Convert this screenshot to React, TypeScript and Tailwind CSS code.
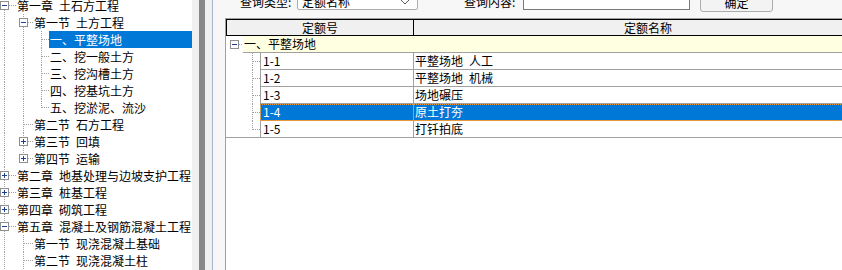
import React from 'react';

type TreeRow = {
  a: string;
  b: string;
  lvl: number;
  box?: '+' | '-';
  anc: number[];
  self: 'both' | 'top' | 'bottom';
  sel?: boolean;
};

const LX = [4, 23, 41];
const BOXX = [0, 19];
const TL = [16, 33, 49];

const rows: TreeRow[] = [
  { a: '第一章', b: '土石方工程', lvl: 0, box: '-', anc: [], self: 'bottom' },
  { a: '第一节', b: '土方工程', lvl: 1, box: '-', anc: [4], self: 'both' },
  { a: '一、平整场地', b: '', lvl: 2, anc: [4, 23], self: 'both', sel: true },
  { a: '二、挖一般土方', b: '', lvl: 2, anc: [4, 23], self: 'both' },
  { a: '三、挖沟槽土方', b: '', lvl: 2, anc: [4, 23], self: 'both' },
  { a: '四、挖基坑土方', b: '', lvl: 2, anc: [4, 23], self: 'both' },
  { a: '五、挖淤泥、流沙', b: '', lvl: 2, anc: [4, 23], self: 'top' },
  { a: '第二节', b: '石方工程', lvl: 1, anc: [4], self: 'both' },
  { a: '第三节', b: '回填', lvl: 1, box: '+', anc: [4], self: 'both' },
  { a: '第四节', b: '运输', lvl: 1, box: '+', anc: [4], self: 'top' },
  { a: '第二章', b: '地基处理与边坡支护工程', lvl: 0, box: '+', anc: [], self: 'both' },
  { a: '第三章', b: '桩基工程', lvl: 0, box: '+', anc: [], self: 'both' },
  { a: '第四章', b: '砌筑工程', lvl: 0, box: '+', anc: [], self: 'both' },
  { a: '第五章', b: '混凝土及钢筋混凝土工程', lvl: 0, box: '-', anc: [], self: 'both' },
  { a: '第一节', b: '现浇混凝土基础', lvl: 1, anc: [4], self: 'both' },
  { a: '第二节', b: '现浇混凝土柱', lvl: 1, anc: [4], self: 'both' },
];

const DOT = '#a0a0a0';

function VLine({ x, y1, y2 }: { x: number; y1: number; y2: number }) {
  return (
    <line
      x1={x + 0.5}
      x2={x + 0.5}
      y1={y1}
      y2={y2}
      stroke={DOT}
      strokeDasharray="1 1"
      shapeRendering="crispEdges"
    />
  );
}

function HLine({ x1, x2, y }: { x1: number; x2: number; y: number }) {
  return (
    <line
      x1={x1}
      x2={x2}
      y1={y + 0.5}
      y2={y + 0.5}
      stroke={DOT}
      strokeDasharray="1 1"
      shapeRendering="crispEdges"
    />
  );
}

function Box({ x, y, kind }: { x: number; y: number; kind: '+' | '-' }) {
  return (
    <g shapeRendering="crispEdges">
      <rect x={x + 0.5} y={y + 0.5} width={8} height={8} fill="#fff" stroke="#8f8f8f" />
      <line x1={x + 2} x2={x + 7} y1={y + 4.5} y2={y + 4.5} stroke="#1c3e95" />
      {kind === '+' && <line x1={x + 4.5} x2={x + 4.5} y1={y + 2} y2={y + 7} stroke="#1c3e95" />}
    </g>
  );
}

function Gutter({ r }: { r: TreeRow }) {
  const w = TL[r.lvl];
  const x = LX[r.lvl];
  const hasBox = !!r.box;
  return (
    <svg width={w} height={17} className="block shrink-0">
      {r.anc.map((ax) => (
        <VLine key={ax} x={ax} y1={0} y2={17} />
      ))}
      {(r.self === 'both' || r.self === 'top') && <VLine x={x} y1={0} y2={hasBox ? 4 : 9} />}
      {(r.self === 'both' || r.self === 'bottom') && <VLine x={x} y1={hasBox ? 13 : 8} y2={17} />}
      <HLine x1={hasBox ? BOXX[r.lvl] + 9 : x + 1} x2={w} y={8} />
      {r.box && <Box x={BOXX[r.lvl]} y={4} kind={r.box} />}
    </svg>
  );
}

const data = [
  { no: '1-1', name: ['平整场地', '人工'] },
  { no: '1-2', name: ['平整场地', '机械'] },
  { no: '1-3', name: ['场地碾压'] },
  { no: '1-4', name: ['原土打夯'], sel: true },
  { no: '1-5', name: ['打钎拍底'] },
];

function Sp() {
  return <span className="inline-block w-[6px]" />;
}

export default function App() {
  return (
    <div className="flex h-[270px] w-[842px] overflow-hidden bg-white font-['Noto_Sans_CJK_SC','Noto_Sans',sans-serif] text-[12px] leading-[17px] text-black">
      {/* Tree panel */}
      <div className="w-[192px] shrink-0 overflow-hidden bg-white">
        <div className="-mt-[3px]">
          {rows.map((r, i) => (
            <div key={i} className="flex h-[17px] whitespace-nowrap">
              <Gutter r={r} />
              <div className={r.sel ? 'flex-1 bg-[#0078d7] pl-px text-white' : 'pl-px'}>
                {r.a}
                {r.b && (
                  <>
                    <Sp />
                    {r.b}
                  </>
                )}
              </div>
            </div>
          ))}
        </div>
      </div>

      {/* Splitter */}
      <div className="w-[7px] shrink-0 bg-[#f0f0f0]" />
      <div className="w-[6px] shrink-0 bg-[#888888]" />
      <div className="w-[7px] shrink-0 bg-[#f0f0f0]" />
      <div className="w-px shrink-0 bg-[#a9b5c9]" />

      {/* Right panel */}
      <div className="flex min-w-0 flex-1 flex-col bg-[#f7f7f7]">
        {/* Query bar (scrolled, partially visible) */}
        <div className="h-[18px] shrink-0 overflow-hidden">
          <div className="-mt-[10px] flex h-[28px] items-start whitespace-nowrap">
            <div className="ml-[27px] mt-[2px] w-[57px] leading-[20px]">查询类型:</div>
            <div className="flex h-[20px] w-[121px] shrink-0 items-start justify-between rounded-[2px] border border-[#acacac] bg-white pl-[4px] pr-[6px]">
              <span className="mt-px leading-[20px]">定额名称</span>
              <svg width="12" height="7" className="mt-[7px] block">
                <polyline points="0.5,0.5 6,6 11.5,0.5" fill="none" stroke="#5a5a5a" strokeWidth="1" />
              </svg>
            </div>
            <div className="ml-[46px] mt-[2px] w-[59px] leading-[20px]">查询内容:</div>
            <div className="h-[20px] w-[167px] shrink-0 border border-[#7a7a7a] bg-white" />
            <div className="ml-[10px] flex h-[22px] w-[73px] shrink-0 items-start justify-center rounded-[3px] border border-[#adadad] bg-[#f3f3f3]">
              <span className="mt-[2px] leading-[20px]">确定</span>
            </div>
          </div>
        </div>

        {/* Grid */}
        <div className="ml-[12px] flex w-[658px] flex-1 flex-col border-l border-t border-[#a0a0a0] bg-white">
          {/* Header */}
          <div className="flex h-[17px] shrink-0 border border-black bg-[#f0f0f0] leading-[15px]">
            <div className="w-[187px] shrink-0 border-r border-black text-center">定额号</div>
            <div className="flex-1 text-center">定额名称</div>
          </div>

          {/* Group row */}
          <div className="flex h-[17px] shrink-0">
            <svg width={17} height={17} className="block shrink-0">
              <Box x={4} y={4} kind="-" />
              <HLine x1={13} x2={17} y={8} />
            </svg>
            <div className="flex-1 border-b border-[#a0a0a0] bg-[#ffffe1] pl-px leading-[16px]">一、平整场地</div>
          </div>

          {/* Data rows */}
          {data.map((d, i) => {
            const last = i === data.length - 1;
            return (
              <div
                key={d.no}
                className={`flex h-[17px] shrink-0 whitespace-nowrap ${last ? 'border-b border-[#a0a0a0]' : ''}`}
              >
                <svg width={34} height={last ? 16 : 17} className="block shrink-0">
                  <VLine x={26} y1={0} y2={last ? 9 : 17} />
                  <HLine x1={27} x2={34} y={8} />
                </svg>
                <div
                  className={`flex flex-1 ${last ? '' : 'border-b border-[#a0a0a0]'} ${
                    d.sel
                      ? 'bg-[#0078d7] text-white outline-1 -outline-offset-1 outline-dotted outline-[#e89a3c]'
                      : ''
                  }`}
                >
                  <div className="w-[153px] shrink-0 border-l border-[#a0a0a0] pl-[2px] leading-[16px]">{d.no}</div>
                  <div className="flex-1 border-l border-[#a0a0a0] pl-px leading-[16px]">
                    {d.name[0]}
                    {d.name[1] && (
                      <>
                        <Sp />
                        {d.name[1]}
                      </>
                    )}
                  </div>
                </div>
              </div>
            );
          })}
        </div>
      </div>
    </div>
  );
}
